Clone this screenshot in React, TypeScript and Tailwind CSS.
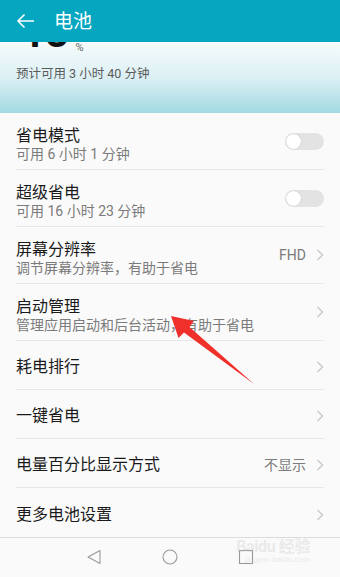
import React from 'react';

const font = { fontFamily: '"Roboto", "Noto Sans CJK SC", sans-serif' };

function Chevron() {
  return (
    <svg width="8" height="12" viewBox="0 0 8 12" className="ml-[10px]">
      <path d="M1.5 1 L6.5 6 L1.5 11" fill="none" stroke="#c9c9c9" strokeWidth="1.4" />
    </svg>
  );
}

function Toggle() {
  return (
    <div className="w-[39px] h-[17px] rounded-full bg-[#e3e3e3] flex items-center px-[1px]">
      <div className="w-[15px] h-[15px] rounded-full bg-white shadow-[0_0_1px_rgba(0,0,0,0.25)]" />
    </div>
  );
}

function TwoLineRow({ title, sub, right }: { title: string; sub: string; right: React.ReactNode }) {
  return (
    <div className="h-[57px] pl-[16px] pr-[16px]">
      <div className="h-full flex items-center border-b border-[#e8e8e8]">
        <div className="flex-1 flex flex-col self-start pt-[13px]">
          <span className="text-[16px] leading-[20px] text-[#1a1a1a]">{title}</span>
          <span className="text-[14px] leading-[17px] text-[#7b7b7b]">{sub}</span>
        </div>
        {right}
      </div>
    </div>
  );
}

function OneLineRow({ title, value, last }: { title: string; value?: string; last?: boolean }) {
  return (
    <div className="h-[49px] pl-[16px] pr-[16px]">
      <div className={`h-full flex items-center pt-[4px] ${last ? '' : 'border-b border-[#e8e8e8]'}`}>
        <span className="flex-1 text-[16px] leading-[22px] text-[#1a1a1a]">{title}</span>
        {value && <span className="text-[14px] text-[#7b7b7b]">{value}</span>}
        <Chevron />
      </div>
    </div>
  );
}

export default function App() {
  return (
    <div className="relative w-[340px] h-[577px] overflow-hidden flex flex-col bg-[#fafafa]" style={font}>
      {/* Header */}
      <div className="h-[42px] bg-[#05a6c0] flex items-center pl-[16px] shrink-0 z-10">
        <svg width="19" height="16" viewBox="0 0 19 16" className="shrink-0">
          <path d="M18 8 H2 M8.5 1.5 L2 8 L8.5 14.5" fill="none" stroke="white" strokeWidth="1.6" />
        </svg>
        <span className="ml-[19px] text-[19px] text-white leading-none">电池</span>
      </div>

      {/* Battery banner */}
      <div className="h-[71px] shrink-0 overflow-hidden bg-gradient-to-b from-[#f6fbfc] via-[#dcf0f4] to-[#a2d9e3] pl-[16px]">
        <div className="flex items-end h-[12px] overflow-hidden">
          <span className="text-[48px] leading-none font-medium text-[#111] -mb-[1px]">40</span>
          <span className="ml-[5px] mb-[1px] text-[11px] text-[#666] leading-none">%</span>
        </div>
        <div className="mt-[11px] text-[12.5px] leading-[17px] text-[#5a5a5a]">预计可用 3 小时 40 分钟</div>
      </div>

      {/* Settings list */}
      <div className="flex-1 flex flex-col">
        <TwoLineRow title="省电模式" sub="可用 6 小时 1 分钟" right={<Toggle />} />
        <TwoLineRow title="超级省电" sub="可用 16 小时 23 分钟" right={<Toggle />} />
        <TwoLineRow
          title="屏幕分辨率"
          sub="调节屏幕分辨率，有助于省电"
          right={<div className="flex items-center"><span className="text-[14px] text-[#7b7b7b]">FHD</span><Chevron /></div>}
        />
        <TwoLineRow title="启动管理" sub="管理应用启动和后台活动，有助于省电" right={<Chevron />} />
        <OneLineRow title="耗电排行" />
        <OneLineRow title="一键省电" />
        <OneLineRow title="电量百分比显示方式" value="不显示" />
        <OneLineRow title="更多电池设置" last />
      </div>

      {/* Navigation bar */}
      <div className="relative h-[40px] shrink-0 border-t border-[#dcdcdc] bg-[#fafafa] flex items-center pl-[86px] pb-[1px]">
        <svg width="16" height="16" viewBox="0 0 16 16" className="shrink-0">
          <path d="M14 1.5 L2 8 L14 14.5 Z" fill="none" stroke="#9a9a9a" strokeWidth="1.1" strokeLinejoin="round" />
        </svg>
        <svg width="16" height="16" viewBox="0 0 16 16" className="shrink-0 ml-[60px]">
          <circle cx="8" cy="8" r="7" fill="none" stroke="#9a9a9a" strokeWidth="1.1" />
        </svg>
        <svg width="16" height="16" viewBox="0 0 16 16" className="shrink-0 ml-[60px]">
          <rect x="1.5" y="1.5" width="13" height="13" fill="none" stroke="#9a9a9a" strokeWidth="1.1" />
        </svg>
        <div className="absolute right-[30px] top-0 flex flex-col items-end opacity-25 text-[#bbb] pointer-events-none">
          <span className="text-[16px] leading-[17px] font-bold tracking-tight">Baidu 经验</span>
          <span className="text-[8px] leading-[10px]">jingyan.baidu.com</span>
        </div>
      </div>

      {/* Red annotation arrow */}
      <svg className="absolute left-0 top-0 pointer-events-none" width="340" height="577">
        <polygon
          points="171,316 194,321 189.5,327 254,384 184,332.5 178.5,338"
          fill="#f0302a"
        />
      </svg>
    </div>
  );
}
